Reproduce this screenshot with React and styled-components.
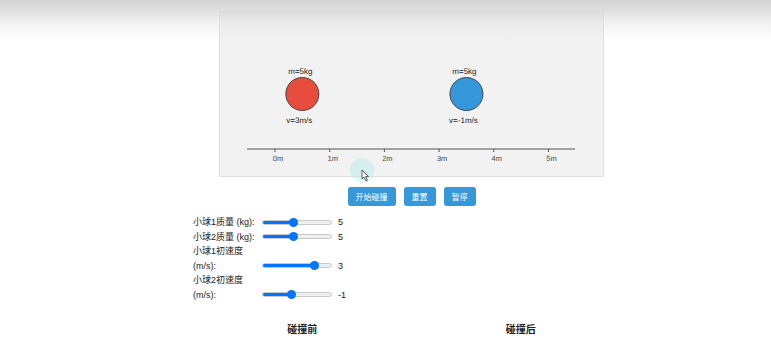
import React from "react";
import styled, { createGlobalStyle } from "styled-components";

const GlobalStyle = createGlobalStyle`
  html, body {
    margin: 0;
    padding: 0;
    background: #fff;
  }
  body {
    font-family: "Liberation Sans", "Noto Sans CJK SC", Arial, sans-serif;
    color: #222;
  }
`;

const TICK0 = 55;
const TICK_STEP = 54.7;
const AXIS_Y = 137;
const BALL_Y = 82;
const BALL_R = 16.5;

const balls = [
  { pos: 0.5, mass: 5, v: 3, color: "#e74c3c" },
  { pos: 3.5, mass: 5, v: -1, color: "#3498db" }
];

const controls = [
  { label: "小球1质量 (kg):", min: 1, max: 10, value: 5 },
  { label: "小球2质量 (kg):", min: 1, max: 10, value: 5 },
  { label: "小球1初速度 (m/s):", min: -5, max: 5, value: 3 },
  { label: "小球2初速度 (m/s):", min: -5, max: 5, value: -1 }
];

// grey fade at top of the capture, lies over everything
const TopShade = styled.div`
  position: fixed;
  top: 0;
  left: 0;
  right: 0;
  height: 40px;
  background: linear-gradient(
    to bottom,
    rgba(205, 205, 205, 0.9) 0%,
    rgba(225, 225, 225, 0.5) 55%,
    rgba(255, 255, 255, 0) 100%
  );
  pointer-events: none;
  z-index: 5;
`;

const Page = styled.div`
  width: 771px;
  height: 342px;
  box-sizing: border-box;
  padding: 11px 0 0 193px;
  overflow: hidden;
`;

const Container = styled.div`
  position: relative;
  width: 437px;
`;

const Stage = styled.div`
  width: 385px;
  height: 166px;
  box-sizing: border-box;
  margin: 0 0 0 26px;
  background: #f2f2f2;
  border: 1px solid #e0e0e0;
`;

const StageSvg = styled.svg`
  display: block;
  width: 100%;
  height: 100%;
  font-family: "Liberation Sans", Arial, sans-serif;
  text-rendering: geometricPrecision;
`;

const ButtonRow = styled.div`
  display: flex;
  justify-content: center;
  gap: 8px;
  margin-top: 10px;
`;

const Button = styled.button`
  height: 19px;
  padding: 0 8px;
  border: 0;
  border-radius: 3px;
  background: #3498db;
  color: #fff;
  font-family: "Noto Sans CJK SC", sans-serif;
  font-size: 8px;
  line-height: 19px;
  cursor: pointer;
`;

const Controls = styled.div`
  display: flex;
  flex-direction: column;
  margin-top: 9px;
`;

const Row = styled.div`
  display: flex;
  align-items: flex-end;
  font-size: 9px;
  line-height: 14.5px;
`;

const Label = styled.label`
  width: 66px;
  margin-right: 3px;
`;

const SliderCell = styled.div`
  height: 14.5px;
  display: flex;
  align-items: center;
`;

const Range = styled.input`
  -webkit-appearance: none;
  appearance: none;
  width: 70px;
  height: 5px;
  margin: 0;
  border-radius: 3px;
  border: 1px solid #c8c8c8;
  box-sizing: border-box;
  outline: none;

  &::-webkit-slider-thumb {
    -webkit-appearance: none;
    width: 9px;
    height: 9px;
    border-radius: 50%;
    background: #0075ff;
    border: 0;
  }
`;

const Value = styled.span`
  margin-left: 6px;
`;

const Charts = styled.div`
  display: grid;
  grid-template-columns: 1fr 1fr;
  margin-top: 20px;
`;

const ChartTitle = styled.h3`
  margin: 0;
  text-align: center;
  font-family: "Noto Sans CJK SC", sans-serif;
  font-size: 10px;
  font-weight: 700;
  line-height: 14px;
`;

const Cursor = styled.svg`
  position: absolute;
  left: 156px;
  top: 147px;
  pointer-events: none;
`;

function Slider({ min, max, value }) {
  const pct = ((value - min) / (max - min)) * 100;
  return (
    <Range
      type="range"
      min={min}
      max={max}
      defaultValue={value}
      style={{
        background: `linear-gradient(to right, #0075ff ${pct}%, #efefef ${pct}%)`
      }}
    />
  );
}

export default function App() {
  return (
    <>
      <GlobalStyle />
      <TopShade />
      <Page>
        <Container>
          <Stage>
            <StageSvg viewBox="0 0 383 164">
              <line x1="27" y1={AXIS_Y} x2="355" y2={AXIS_Y} stroke="#555" strokeWidth="1" />
              {[0, 1, 2, 3, 4, 5].map(i => {
                const x = TICK0 + i * TICK_STEP;
                return (
                  <g key={i}>
                    <line x1={x} y1={AXIS_Y} x2={x} y2={AXIS_Y + 3} stroke="#555" strokeWidth="1" />
                    <text x={x + 3} y={AXIS_Y + 12} fontSize="7.5" fill="#444" textAnchor="middle">
                      {i}m
                    </text>
                  </g>
                );
              })}
              {balls.map((b, i) => {
                const cx = TICK0 + b.pos * TICK_STEP;
                return (
                  <g key={i}>
                    <text x={cx - 2} y={BALL_Y - 20} fontSize="8" fill="#222" textAnchor="middle">
                      m={b.mass}kg
                    </text>
                    <circle cx={cx} cy={BALL_Y} r={BALL_R} fill={b.color} stroke="#444" strokeWidth="1" />
                    <text x={cx - 3} y={BALL_Y + 29} fontSize="8" fill="#222" textAnchor="middle">
                      v={b.v}m/s
                    </text>
                  </g>
                );
              })}
            </StageSvg>
          </Stage>

          <ButtonRow>
            <Button>开始碰撞</Button>
            <Button>重置</Button>
            <Button>暂停</Button>
          </ButtonRow>

          <Controls>
            {controls.map((c, i) => (
              <Row key={i}>
                <Label>{c.label}</Label>
                <SliderCell>
                  <Slider min={c.min} max={c.max} value={c.value} />
                  <Value>{c.value}</Value>
                </SliderCell>
              </Row>
            ))}
          </Controls>

          <Charts>
            <ChartTitle>碰撞前</ChartTitle>
            <ChartTitle>碰撞后</ChartTitle>
          </Charts>

          <Cursor width="28" height="30" viewBox="0 0 28 30">
            <circle cx="13" cy="12" r="12" fill="rgba(160, 232, 232, 0.35)" />
            <path
              d="M13 12 L13 21 L15 19 L17 23 L18.5 22.3 L16.6 18.5 L19.5 18.5 Z"
              fill="#fff"
              stroke="#333"
              strokeWidth="0.8"
              strokeLinejoin="round"
            />
          </Cursor>
        </Container>
      </Page>
    </>
  );
}
